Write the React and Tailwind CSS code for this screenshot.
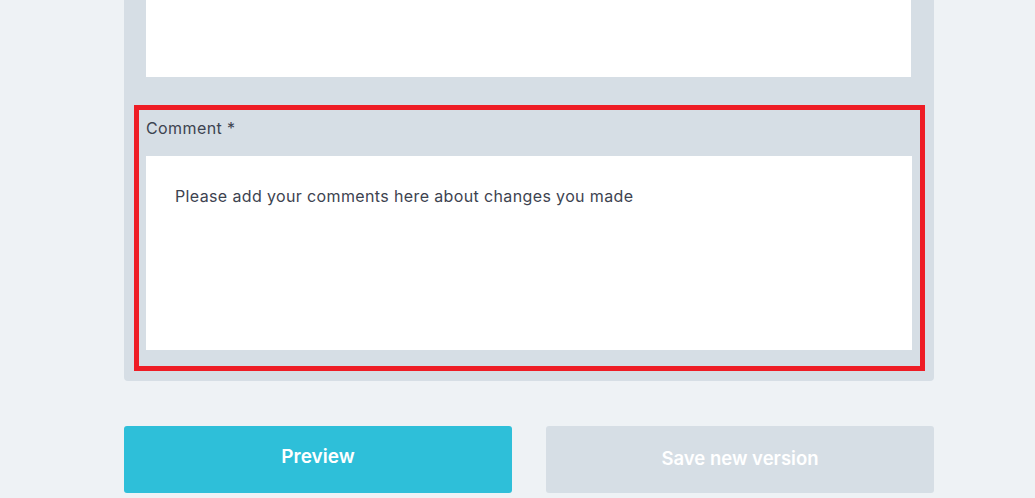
export default function App() {
  return (
    <div
      className="w-[1035px] h-[498px] bg-[#eef2f5] overflow-hidden"
      style={{ fontFamily: "Inter, 'Noto Sans', sans-serif" }}
    >
      <div className="ml-[124px] w-[810px]">
        <div className="bg-[#d6dee5] rounded-b-[4px] pl-[22px] pr-[23px] pb-[10px]">
          <div className="h-[77px] bg-white" />
          <div className="mt-[28px] ml-[-12px] mr-[-14px] border-[5px] border-[#ee1c25] pl-[7px] pr-[8px] pt-[6px] pb-[16px]">
            <div className="text-[16px] leading-[24px] tracking-[0.4px] text-[#3d4350]">Comment *</div>
            <div className="mt-[16px] h-[194px] bg-white pl-[29px] pt-[28px]">
              <div className="text-[16px] leading-[24px] tracking-[0.37px] text-[#3d4350]">
                Please add your comments here about changes you made
              </div>
            </div>
          </div>
        </div>
        <div className="mt-[45px] flex gap-[34px]">
          <button className="w-[388px] h-[67px] rounded-[3px] bg-[#2ebfd9] text-white text-[19px] font-semibold pb-[5px]">
            Preview
          </button>
          <button className="w-[388px] h-[67px] rounded-[3px] bg-[#d6dee5] text-white text-[18.5px] font-semibold pb-[1px]">
            Save new version
          </button>
        </div>
      </div>
    </div>
  );
}
